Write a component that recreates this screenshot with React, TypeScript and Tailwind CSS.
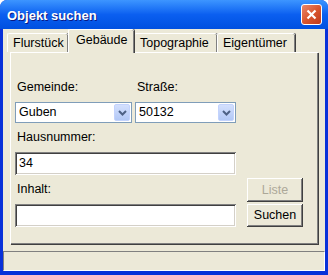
import React from 'react';

const raised =
  'shadow-[inset_-1px_-1px_#404040,inset_1px_1px_#ffffff,inset_-2px_-2px_#808080,inset_2px_2px_#ece9d8]';
const sunken =
  'shadow-[inset_1px_1px_#808080,inset_-1px_-1px_#ffffff,inset_2px_2px_#404040,inset_-2px_-2px_#d4d0c8]';

function Combo({ value, width }: { value: string; width: string }) {
  return (
    <div className={`${width} h-[21px] border border-[#7f9db9] bg-white flex items-center`}>
      <span className="flex-1 pl-[3px] text-[12.5px] leading-none text-black">{value}</span>
      <div className="w-[16px] h-[17px] mr-[1px] rounded-[2px] border border-[#c3d3fd] bg-gradient-to-b from-[#d4e0fd] to-[#b2c8f6] flex items-center justify-center">
        <svg width="9" height="6" viewBox="0 0 9 6">
          <path d="M1 1 L4.5 4.5 L8 1" stroke="#4d6185" strokeWidth="2" fill="none" />
        </svg>
      </div>
    </div>
  );
}

function Tab({ label, width, selected }: { label: string; width: string; selected?: boolean }) {
  return (
    <div
      className={`${width} ${
        selected ? 'h-[24px] -mb-[1px] z-10 pl-[7px] pt-[3px]' : 'h-[19px] pl-[5px] pt-[2px]'
      } bg-[#ece9d8] border-t border-l border-white rounded-t-[2px] shadow-[inset_-1px_0_#808080,1px_0_#404040] text-[12.5px] leading-[14px] text-black`}
    >
      {label}
    </div>
  );
}

export default function App() {
  return (
    <div
      className="w-[328px] h-[275px] flex flex-col bg-[#0831d9] rounded-t-[7px] overflow-hidden"
      style={{ fontFamily: '"Liberation Sans", Arial, sans-serif' }}
    >
      {/* Title bar */}
      <div className="h-[29px] shrink-0 flex items-center justify-between pl-[7px] pr-[6px] bg-gradient-to-b from-[#3d95ff] via-[#0b5ff0] to-[#0050e0]">
        <span className="text-white font-bold text-[13px] leading-none pt-[1px] [text-shadow:1px_1px_#0a1883]">
          Objekt suchen
        </span>
        <div className="w-[21px] h-[21px] rounded-[3px] border border-white bg-gradient-to-br from-[#e9866a] via-[#d9572f] to-[#c1391b] flex items-center justify-center">
          <svg width="11" height="11" viewBox="0 0 11 11">
            <path d="M1.5 1.5 L9.5 9.5 M9.5 1.5 L1.5 9.5" stroke="white" strokeWidth="2.2" />
          </svg>
        </div>
      </div>

      {/* Client area */}
      <div className="flex-1 mx-[3px] mb-[4px] bg-[#ece9d8] flex flex-col">
        {/* Tabs */}
        <div className="h-[23px] flex items-end pl-[4px]">
          <Tab label="Flurstück" width="w-[61px]" />
          <Tab label="Gebäude" width="w-[66px]" selected />
          <Tab label="Topographie" width="w-[83px]" />
          <Tab label="Eigentümer" width="w-[78px]" />
        </div>

        {/* Panel */}
        <div className="mx-[7px] h-[192px] border-t border-l border-white shadow-[inset_-1px_-1px_#808080,1px_1px_#404040] pl-[4px] pt-[27px]">
          <div className="flex items-end">
            <div className="w-[221px] flex flex-col">
              <div className="flex h-[14px] text-[12.5px] leading-[14px] text-black">
                <span className="w-[120px] pl-[2px]">Gemeinde:</span>
                <span className="pl-[2px]">Straße:</span>
              </div>
              <div className="flex gap-[3px] mt-[8px]">
                <Combo value="Guben" width="w-[117px]" />
                <Combo value="50132" width="w-[101px]" />
              </div>
              <div className="mt-[7px] h-[14px] pl-[2px] text-[12.5px] leading-[14px] text-black">
                Hausnummer:
              </div>
              <div className={`mt-[8px] h-[23px] bg-white ${sunken} flex items-center pl-[4px] text-[12.5px] text-black`}>
                34
              </div>
              <div className="mt-[7px] h-[14px] pl-[2px] text-[12.5px] leading-[14px] text-black">
                Inhalt:
              </div>
              <div className={`mt-[8px] h-[23px] bg-white ${sunken}`} />
            </div>
            <div className="ml-[11px] flex flex-col gap-[2px]">
              <button className={`w-[56px] h-[24px] bg-[#ece9d8] ${raised} text-[12.5px] text-[#aca899]`}>
                Liste
              </button>
              <button className={`w-[56px] h-[23px] bg-[#ece9d8] ${raised} text-[12.5px] text-black`}>
                Suchen
              </button>
            </div>
          </div>
        </div>

        {/* Status bar */}
        <div className="mt-[7px] flex-1 border-t border-l border-[#808080] border-b border-r border-b-white border-r-white" />
      </div>
    </div>
  );
}
